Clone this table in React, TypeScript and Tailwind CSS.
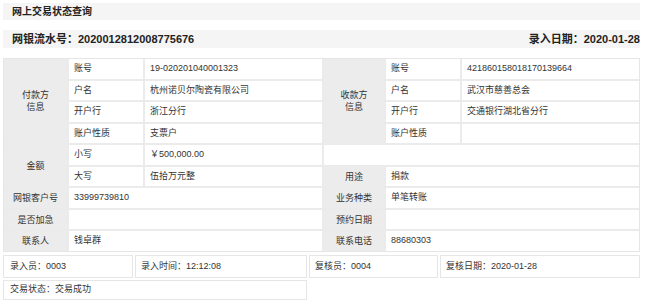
const font = { fontFamily: '"Liberation Sans", "Noto Sans CJK SC", sans-serif' };

const Label = ({ children, className = "" }: { children: React.ReactNode; className?: string }) => (
  <div className={`flex items-center justify-center bg-[#ececec] text-center leading-[12px] ${className}`}>
    {children}
  </div>
);

const Cell = ({ children, className = "" }: { children?: React.ReactNode; className?: string }) => (
  <div className={`flex items-center bg-white pl-[5px] ${className}`}>{children}</div>
);

export default function App() {
  return (
    <div style={font} className="w-[650px] h-[305px] bg-white text-[9px] text-[#333]">
      <div className="ml-[3px] w-[637px] pt-[3px]">
        <div className="flex h-[17px] items-center bg-[#f5f5f5] pl-[9px] text-[10px] font-bold text-[#222]">
          网上交易状态查询
        </div>
        <div className="mt-[10px] flex h-[18px] items-center justify-between bg-[#f5f5f5] pl-[9px] text-[11px] font-bold text-[#222]">
          <span>网银流水号：2020012812008775676</span>
          <span>
            <span className="font-semibold">录入日期：</span>2020-01-28
          </span>
        </div>

        <div className="mt-[10px] grid grid-cols-[63px_74px_177px_60px_74px_177px] grid-rows-[20px_19px_20px_19px_20px_19px_20px_19px_20px] gap-[2px] border border-[#e6e6e6] bg-[#ebebeb]">
          <Label className="row-span-4">
            付款方
            <br />
            信息
          </Label>
          <Cell>账号</Cell>
          <Cell>19-020201040001323</Cell>
          <Label className="row-span-4">
            收款方
            <br />
            信息
          </Label>
          <Cell>账号</Cell>
          <Cell>421860158018170139664</Cell>

          <Cell>户名</Cell>
          <Cell>杭州诺贝尔陶瓷有限公司</Cell>
          <Cell>户名</Cell>
          <Cell>武汉市慈善总会</Cell>

          <Cell>开户行</Cell>
          <Cell>浙江分行</Cell>
          <Cell>开户行</Cell>
          <Cell>交通银行湖北省分行</Cell>

          <Cell>账户性质</Cell>
          <Cell>支票户</Cell>
          <Cell>账户性质</Cell>
          <Cell />

          <Label className="row-span-2">金额</Label>
          <Cell>小写</Cell>
          <Cell>￥500,000.00</Cell>
          <Cell className="col-span-3" />

          <Cell>大写</Cell>
          <Cell>伍拾万元整</Cell>
          <Label>用途</Label>
          <Cell className="col-span-2">捐款</Cell>

          <Label>网银客户号</Label>
          <Cell className="col-span-2">33999739810</Cell>
          <Label>业务种类</Label>
          <Cell className="col-span-2">单笔转账</Cell>

          <Label>是否加急</Label>
          <Cell className="col-span-2" />
          <Label>预约日期</Label>
          <Cell className="col-span-2" />

          <Label>联系人</Label>
          <Cell className="col-span-2">钱卓群</Cell>
          <Label>联系电话</Label>
          <Cell className="col-span-2">88680303</Cell>
        </div>

        <div className="mt-[3px] grid grid-cols-[130px_172px_129px_200px] grid-rows-[23px_20px] gap-[2px]">
          <div className="flex items-center border border-[#e6e6e6] pl-[6px]">录入员：0003</div>
          <div className="flex items-center border border-[#e6e6e6] pl-[5px]">录入时间：12:12:08</div>
          <div className="flex items-center border border-[#e6e6e6] pl-[5px]">复核员：0004</div>
          <div className="flex items-center border border-[#e6e6e6] pl-[5px]">复核日期：2020-01-28</div>
          <div className="col-span-2 flex items-center border border-[#e6e6e6] pl-[6px]">交易状态：交易成功</div>
        </div>
      </div>
    </div>
  );
}
